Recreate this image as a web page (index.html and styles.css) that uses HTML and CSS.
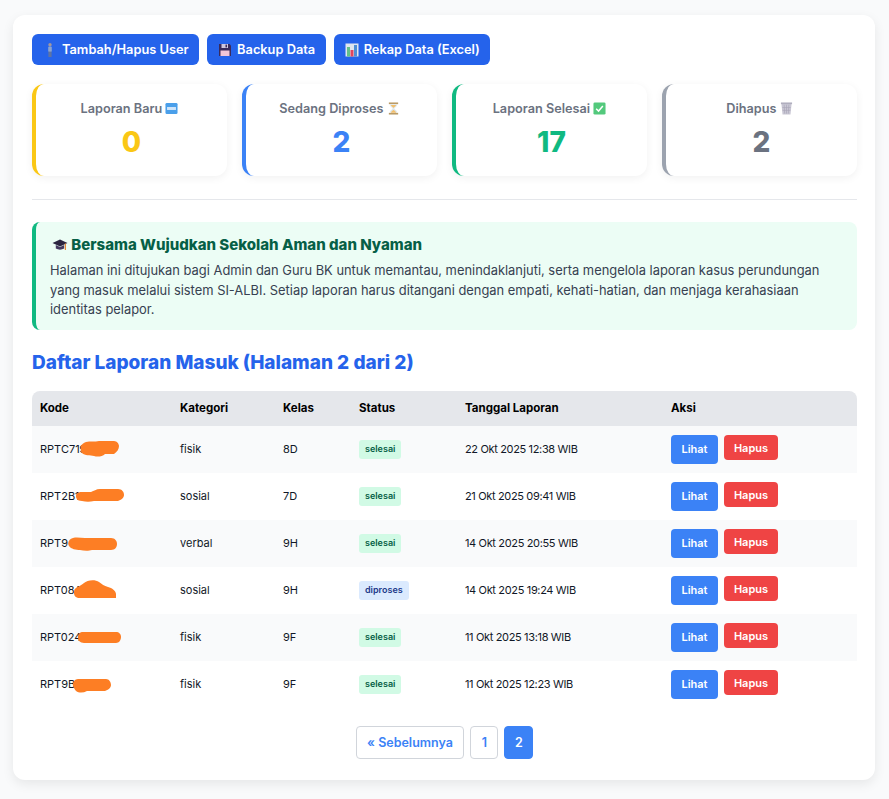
FILE: index.html
```html
<!DOCTYPE html>
<html lang="en">
<head>
    <meta charset="UTF-8">
    <meta name="viewport" content="width=device-width, initial-scale=1.0">
    <title>Dashboard Admin SI-ALBI</title>
    <link rel="stylesheet" href="styles.css">
</head>
<body>
    <div class="container">
        <div class="top-actions">
            <a class="top-button" href="#">
                <svg class="emoji" viewBox="0 0 14 14"><circle cx="7" cy="1.800" r="1.700" fill="#a3979c"/><rect x="5.200" y="3.600" width="3.600" height="5.400" rx="1" fill="#8ba4cf"/><rect x="5.400" y="8.600" width="3.200" height="5.400" fill="#5f74a3"/></svg>
                Tambah/Hapus User
            </a>
            <a class="top-button" href="#">
                <svg class="emoji" viewBox="0 0 14 14"><path d="M1 1h10.500L13 2.500V13H1z" fill="#3a2a5c"/><rect x="3.500" y="1" width="6.500" height="4" fill="#cfc6de"/><rect x="7.500" y="1.600" width="1.500" height="2.800" fill="#3a2a5c"/><rect x="2.500" y="7.500" width="9" height="5.500" fill="#f2c6d8"/></svg>
                Backup Data
            </a>
            <a class="top-button" href="#">
                <svg class="emoji" viewBox="0 0 14 14"><rect x=".5" y=".5" width="13" height="13" fill="#dfe6ee"/><rect x="2" y="4" width="3" height="9.500" fill="#63c08a"/><rect x="5.500" y="7" width="3" height="6.500" fill="#e0455e"/><rect x="9" y="2" width="3" height="11.500" fill="#4d8fd6"/></svg>
                Rekap Data (Excel)
            </a>
        </div>

        <div class="stats">
            <div class="stat-card stat-new">
                <h3>Laporan Baru
                    <svg class="emoji" viewBox="0 0 14 14"><rect x=".5" y="1" width="13" height="12" rx="1.500" fill="#4a9fea"/><rect x="2.200" y="5.400" width="9.600" height="3.200" fill="#cfe5fa"/></svg>
                </h3>
                <p>0</p>
            </div>
            <div class="stat-card stat-process">
                <h3>Sedang Diproses
                    <svg class="emoji" viewBox="0 0 14 14"><rect x="2" y=".5" width="10" height="1.800" fill="#b99a66"/><rect x="2" y="11.700" width="10" height="1.800" fill="#b99a66"/><path d="M3 2.300h8c0 3-3 3.400-3 4.700s3 1.700 3 4.700H3c0-3 3-3.400 3-4.700S3 5.300 3 2.300z" fill="#dfe7ea"/><path d="M4.200 3.300h5.600C9.200 5 7.600 5.500 7 6.500 6.400 5.500 4.800 5 4.200 3.300zM4 11.700C4.600 9.500 6.400 9 7 8.500c.6.500 2.400 1 3 3.200z" fill="#f3bf6b"/></svg>
                </h3>
                <p>2</p>
            </div>
            <div class="stat-card stat-done">
                <h3>Laporan Selesai
                    <svg class="emoji" viewBox="0 0 14 14"><rect x=".5" y=".5" width="13" height="13" rx="1.500" fill="#53c97c"/><path d="M3.400 7.200l2.600 2.600 4.600-5.400" fill="none" stroke="#fff" stroke-width="1.600"/></svg>
                </h3>
                <p>17</p>
            </div>
            <div class="stat-card stat-deleted">
                <h3>Dihapus
                    <svg class="emoji" viewBox="0 0 14 14"><path d="M1.500 1.500h11L11.300 13.500H2.700z" fill="#c9c7d4"/><path d="M4.500 3l.5 9.500M7 3v9.500M9.500 3L9 12.500M2.500 6h9M2.800 9h8.400" stroke="#a8a6b8" stroke-width=".7" fill="none"/><rect x="1" y=".5" width="12" height="1.800" fill="#b0aebe"/></svg>
                </h3>
                <p>2</p>
            </div>
        </div>

        <hr class="divider">

        <div class="info-box">
            <h4>
                <svg class="cap" viewBox="0 0 16 14"><path d="M8 1.500L15.500 5 8 8.500.5 5z" fill="#2b2440"/><path d="M3.800 7v3.500c2.400 1.500 6 1.500 8.400 0V7L8 9z" fill="#45395f"/><rect x="12.800" y="5.500" width="1.200" height="6.500" fill="#e58a3a"/></svg>
                Bersama Wujudkan Sekolah Aman dan Nyaman
            </h4>
            <p>Halaman ini ditujukan bagi Admin dan Guru BK untuk memantau, menindaklanjuti, serta mengelola laporan kasus perundungan<br>yang masuk melalui sistem SI-ALBI. Setiap laporan harus ditangani dengan empati, kehati-hatian, dan menjaga kerahasiaan<br>identitas pelapor.</p>
        </div>

        <h2>Daftar Laporan Masuk (Halaman 2 dari 2)</h2>

        <table class="report-table">
            <colgroup>
                <col class="col-code"><col class="col-cat"><col class="col-class"><col class="col-status"><col class="col-date"><col class="col-action">
            </colgroup>
            <thead>
                <tr><th>Kode</th><th>Kategori</th><th>Kelas</th><th>Status</th><th>Tanggal Laporan</th><th>Aksi</th></tr>
            </thead>
            <tbody>
                <tr>
                    <td class="code">RPTC719<svg class="blob blob-1" viewBox="0 0 38 16"><path d="M5 1C9 0 14 1 18 0h15c3 0 5 3 5 5 0 3-2 6-5 8H24c-3 3-8 3-11 2-4-1-9 0-12-3-3-4-2-9 4-11z"/></svg></td>
                    <td>fisik</td><td>8D</td>
                    <td class="status"><span class="badge badge-done">selesai</span></td>
                    <td class="date">22 Okt 2025 12:38 WIB</td>
                    <td class="actions"><a class="btn btn-view" href="#">Lihat</a><a class="btn btn-delete" href="#">Hapus</a></td>
                </tr>
                <tr>
                    <td class="code">RPT2B1<svg class="blob blob-2" viewBox="0 0 48 13"><path d="M6 3h9c3-1 5-3 9-3h18c4 0 6 3 6 6s-3 5-6 6H18c-4 1-8 1-12 0C1 12 0 9 0 7c0-3 2-4 6-4z"/></svg></td>
                    <td>sosial</td><td>7D</td>
                    <td class="status"><span class="badge badge-done">selesai</span></td>
                    <td class="date">21 Okt 2025 09:41 WIB</td>
                    <td class="actions"><a class="btn btn-view" href="#">Lihat</a><a class="btn btn-delete" href="#">Hapus</a></td>
                </tr>
                <tr>
                    <td class="code">RPT9<svg class="blob blob-3" viewBox="0 0 49 14"><path d="M5 1c4-1 8 0 12 0h26c4 0 6 3 6 6s-2 6-6 6H24c-3 1-8 1-12 0-4 0-9-1-11-4C-1 6 1 2 5 1z"/></svg></td>
                    <td>verbal</td><td>9H</td>
                    <td class="status"><span class="badge badge-done">selesai</span></td>
                    <td class="date">14 Okt 2025 20:55 WIB</td>
                    <td class="actions"><a class="btn btn-view" href="#">Lihat</a><a class="btn btn-delete" href="#">Hapus</a></td>
                </tr>
                <tr>
                    <td class="code">RPT08A<svg class="blob blob-4" viewBox="0 0 42 18"><path d="M2 8c3-2 6-3 8-5 3-3 11-4 15-1 3 2 5 4 9 5 4 1 8 4 8 7v4H6C2 18 0 16 0 13c0-2 0-4 2-5z"/></svg></td>
                    <td>sosial</td><td>9H</td>
                    <td class="status"><span class="badge badge-process">diproses</span></td>
                    <td class="date">14 Okt 2025 19:24 WIB</td>
                    <td class="actions"><a class="btn btn-view" href="#">Lihat</a><a class="btn btn-delete" href="#">Hapus</a></td>
                </tr>
                <tr>
                    <td class="code">RPT024<svg class="blob blob-5" viewBox="0 0 43 11"><path d="M5 0h33c3 0 5 2 5 5s-2 6-5 6H6C2 11 0 8 0 5s2-5 5-5z"/></svg></td>
                    <td>fisik</td><td>9F</td>
                    <td class="status"><span class="badge badge-done">selesai</span></td>
                    <td class="date">11 Okt 2025 13:18 WIB</td>
                    <td class="actions"><a class="btn btn-view" href="#">Lihat</a><a class="btn btn-delete" href="#">Hapus</a></td>
                </tr>
                <tr>
                    <td class="code">RPT9B0<svg class="blob blob-6" viewBox="0 0 38 14"><path d="M5 0h28c3 0 5 3 5 6s-3 5-6 6H14c-4 2-8 2-11 0C1 10 0 7 0 5s2-5 5-5z"/></svg></td>
                    <td>fisik</td><td>9F</td>
                    <td class="status"><span class="badge badge-done">selesai</span></td>
                    <td class="date">11 Okt 2025 12:23 WIB</td>
                    <td class="actions"><a class="btn btn-view" href="#">Lihat</a><a class="btn btn-delete" href="#">Hapus</a></td>
                </tr>
            </tbody>
        </table>

        <div class="pagination">
            <a class="page-link" href="#">« Sebelumnya</a>
            <a class="page-link page-num" href="#">1</a>
            <a class="page-link page-num active" href="#">2</a>
        </div>
    </div>
</body>
</html>
```

FILE: styles.css
```css
body {
    font-family: Inter, "Open Sans", sans-serif;
    margin: 0;
    background-color: #f9fafb;
    color: #111827;
    padding: 15px 14px 19px 13px;
}

.container {
    background-color: #fff;
    border-radius: 12px;
    box-shadow: 0 4px 12px rgba(0, 0, 0, 0.08);
    padding: 19px 18px 21px 19px;
}

.emoji {
    width: 14px;
    height: 14px;
    vertical-align: -2px;
}

.top-actions {
    display: flex;
    gap: 8px;
    margin-bottom: 19px;
}

.top-button {
    display: flex;
    align-items: center;
    gap: 5px;
    height: 31px;
    padding: 0 10.5px 0 11px;
    background-color: #2563eb;
    color: #fff;
    font-size: 12.8px;
    font-weight: 600;
    text-decoration: none;
    border-radius: 6px;
}

.stats {
    display: grid;
    grid-template-columns: repeat(4, 195px);
    gap: 15px;
}

.stat-card {
    height: 92px;
    box-sizing: border-box;
    padding-top: 16px;
    border-left: 4px solid #d1d5db;
    border-radius: 12px;
    box-shadow: 0 2px 8px rgba(0, 0, 0, 0.06);
    text-align: center;
}

.stat-card h3 {
    margin: 0;
    font-size: 12.7px;
    line-height: 18px;
    font-weight: 600;
    color: #6b7280;
}

.stat-card .emoji {
    width: 13px;
    height: 13px;
    margin-right: 4px;
}

.stat-card p {
    margin: 6px 0 0;
    font-size: 28px;
    line-height: 36px;
    font-weight: 800;
}

.stat-new { border-left-color: #fac715; }
.stat-new p { color: #fac715; }
.stat-process { border-left-color: #3b82f6; }
.stat-process p { color: #3b82f6; }
.stat-done { border-left-color: #10b981; }
.stat-done p { color: #10b981; }
.stat-deleted { border-left-color: #9ca3af; }
.stat-deleted p { color: #6b7280; }

.divider {
    border: none;
    border-top: 1px solid #e5e7eb;
    margin: 23px 0 22px;
}

.info-box {
    height: 108px;
    box-sizing: border-box;
    padding: 13px 14px 0 14px;
    background-color: #ecfdf5;
    border-left: 4px solid #10b981;
    border-radius: 8px;
}

.info-box h4 {
    margin: 0 0 6px;
    font-size: 15px;
    line-height: 20px;
    font-weight: 800;
    color: #065f46;
}

.cap {
    width: 16px;
    height: 14px;
    vertical-align: -2px;
    margin-left: 2px;
}

.info-box p {
    margin: 0;
    font-size: 12.9px;
    line-height: 19.5px;
    color: #374151;
    white-space: nowrap;
}

h2 {
    margin: 20px 0 15px;
    font-size: 19px;
    line-height: 26px;
    font-weight: 800;
    color: #2563eb;
}

.report-table {
    width: 100%;
    table-layout: fixed;
    border-collapse: collapse;
    font-size: 11px;
}

.col-code { width: 140px; }
.col-cat { width: 103px; }
.col-class { width: 76px; }
.col-status { width: 106px; }
.col-date { width: 206px; }

.report-table th {
    height: 35px;
    padding: 0 8px 2px;
    box-sizing: border-box;
    background-color: #e5e7eb;
    color: #000;
    font-size: 11.5px;
    font-weight: 700;
    text-align: left;
}

.report-table th:first-child { border-top-left-radius: 8px; }
.report-table th:last-child { border-top-right-radius: 8px; }

.report-table td {
    height: 47px;
    padding: 0 8px 2px;
    box-sizing: border-box;
}

.report-table tbody tr:nth-child(odd) { background-color: #f9fafb; }

.report-table .date {
    letter-spacing: -0.35px;
}

.report-table td.status {
    padding-bottom: 0;
}

.code {
    position: relative;
}

.blob {
    position: absolute;
    fill: #fd7e24;
}

.blob-1 { left: 49px; top: 15px; width: 38px; height: 16px; }
.blob-2 { left: 44px; top: 16px; width: 48px; height: 13px; }
.blob-3 { left: 36px; top: 17px; width: 49px; height: 14px; }
.blob-4 { left: 42px; top: 13px; width: 42px; height: 18px; }
.blob-5 { left: 46px; top: 18px; width: 43px; height: 11px; }
.blob-6 { left: 41px; top: 18px; width: 38px; height: 14px; }

.badge {
    display: inline-block;
    height: 19px;
    line-height: 18px;
    padding: 0 6px;
    font-size: 9px;
    font-weight: 600;
    border-radius: 3px;
}

.badge-done { background-color: #d1fae5; color: #065f46; }
.badge-process { background-color: #dbeafe; color: #1e3a8a; }

.report-table td.actions {
    padding-top: 9px;
    padding-bottom: 0;
    vertical-align: top;
    white-space: nowrap;
}

.actions > .btn { vertical-align: top; }

.btn {
    display: inline-block;
    color: #fff;
    font-size: 11px;
    font-weight: 600;
    text-align: center;
    text-decoration: none;
    border-radius: 4px;
}

.btn-view {
    width: 47px;
    height: 29px;
    line-height: 29px;
    background-color: #3b82f6;
    margin-right: 6px;
}

.btn-delete {
    width: 54px;
    height: 25px;
    line-height: 26px;
    background-color: #ef4444;
}

.pagination {
    display: flex;
    justify-content: center;
    gap: 6px;
    margin-top: 18px;
}

.page-link {
    display: block;
    height: 33px;
    box-sizing: border-box;
    line-height: 31px;
    padding: 0 10.5px;
    border: 1px solid #d1d5db;
    border-radius: 4px;
    color: #3b82f6;
    font-size: 12.5px;
    font-weight: 600;
    text-decoration: none;
}

.page-num {
    width: 28px;
    padding: 0;
    text-align: center;
}

.page-link.active {
    width: 29px;
    background-color: #3b82f6;
    border-color: #3b82f6;
    color: #fff;
}
```
